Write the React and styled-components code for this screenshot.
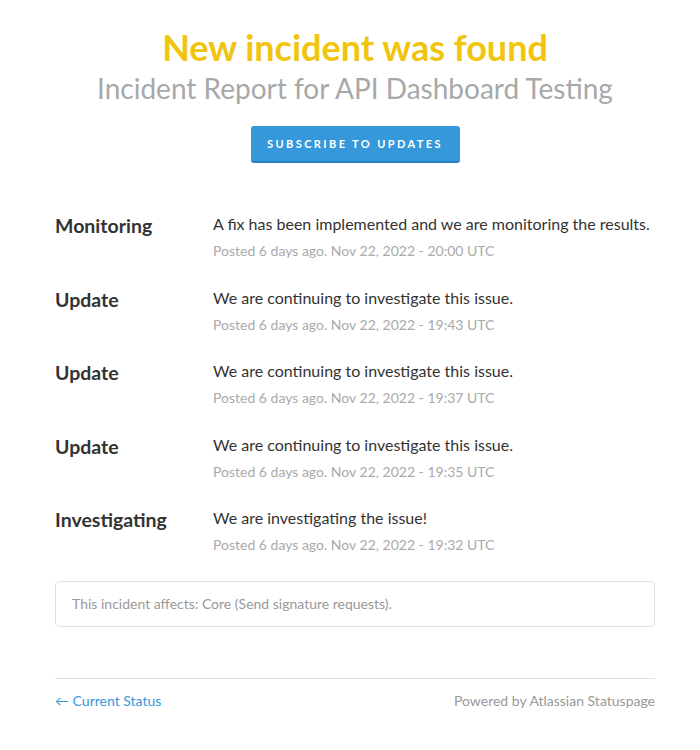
import React from 'react';
import styled, { createGlobalStyle } from 'styled-components';

const GlobalStyle = createGlobalStyle`
  body {
    margin: 0;
    background: #fff;
    font-family: Lato, "Open Sans", Arial, sans-serif;
    color: #333;
  }
`;

const Page = styled.div`
  width: 600px;
  margin: 0 0 0 55px;
  padding-top: 25px;
`;

const Header = styled.header`
  display: flex;
  flex-direction: column;
  align-items: center;
`;

const Title = styled.h1`
  margin: 0;
  font-size: 36px;
  line-height: 44px;
  font-weight: 700;
  color: #f1c40f;
`;

const Subtitle = styled.h2`
  margin: 0;
  font-size: 28px;
  line-height: 38px;
  font-weight: 400;
  color: #a8a8a8;
`;

const SubscribeButton = styled.button`
  margin-top: 19px;
  width: 209px;
  height: 37px;
  border: none;
  border-bottom: 2px solid #2a7fc0;
  border-radius: 3px;
  background: #3498db;
  color: #fff;
  font-family: inherit;
  font-size: 11px;
  font-weight: 700;
  letter-spacing: 2.4px;
  cursor: pointer;
`;

const Updates = styled.section`
  margin-top: 49px;
  display: flex;
  flex-direction: column;
  gap: 24.5px;
`;

const Row = styled.div`
  display: grid;
  grid-template-columns: 158px 1fr;
  align-items: start;
`;

const Status = styled.div`
  font-size: 19.5px;
  font-weight: 700;
  color: #333;
  line-height: 26px;
  padding-top: 1px;
`;

const Body = styled.div`
  font-size: 16px;
  line-height: 24px;
  color: #333;
`;

const Meta = styled.div`
  margin-top: 5px;
  font-size: 14px;
  line-height: 20px;
  color: #aaa;
`;

const Affects = styled.div`
  margin-top: 25.5px;
  padding: 12px 16px;
  border: 1px solid #e0e0e0;
  border-radius: 4px;
  font-size: 14px;
  line-height: 20px;
  color: #999;
`;

const Footer = styled.footer`
  margin-top: 51px;
  border-top: 1px solid #e0e0e0;
  padding-top: 12px;
  display: flex;
  justify-content: space-between;
  align-items: center;
  font-size: 14px;
  line-height: 20px;
`;

const BackLink = styled.a`
  color: #3498db;
  text-decoration: none;
`;

const Powered = styled.a`
  color: #999;
  text-decoration: none;
`;

const updates = [
  { status: 'Monitoring', body: 'A fix has been implemented and we are monitoring the results.', time: '20:00' },
  { status: 'Update', body: 'We are continuing to investigate this issue.', time: '19:43' },
  { status: 'Update', body: 'We are continuing to investigate this issue.', time: '19:37' },
  { status: 'Update', body: 'We are continuing to investigate this issue.', time: '19:35' },
  { status: 'Investigating', body: 'We are investigating the issue!', time: '19:32' },
];

const App = () => {
  return (
    <>
      <GlobalStyle />
      <Page>
        <Header>
          <Title>New incident was found</Title>
          <Subtitle>Incident Report for API Dashboard Testing</Subtitle>
          <SubscribeButton>SUBSCRIBE TO UPDATES</SubscribeButton>
        </Header>
        <Updates>
          {updates.map((u, i) => (
            <Row key={i}>
              <Status>{u.status}</Status>
              <div>
                <Body>{u.body}</Body>
                <Meta>Posted 6 days ago. Nov 22, 2022 - {u.time} UTC</Meta>
              </div>
            </Row>
          ))}
        </Updates>
        <Affects>This incident affects: Core (Send signature requests).</Affects>
        <Footer>
          <BackLink href="#">← Current Status</BackLink>
          <Powered href="#">Powered by Atlassian Statuspage</Powered>
        </Footer>
      </Page>
    </>
  );
};

export default App;
